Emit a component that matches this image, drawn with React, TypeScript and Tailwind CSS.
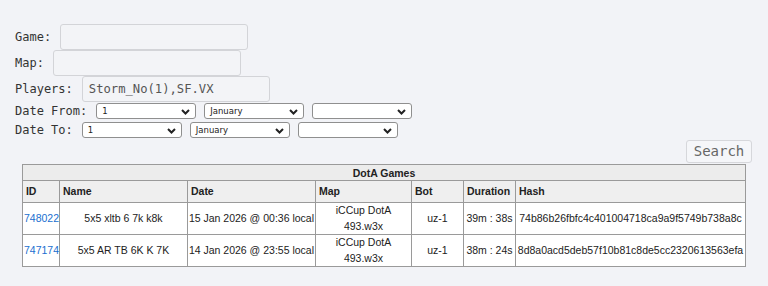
const games = [
  {
    id: "748022",
    name: "5x5 xltb 6 7k k8k",
    date: "15 Jan 2026 @ 00:36 local",
    bot: "uz-1",
    duration: "39m : 38s",
    hash: "74b86b26fbfc4c401004718ca9a9f5749b738a8c",
  },
  {
    id: "747174",
    name: "5x5 AR TB 6K K 7K",
    date: "14 Jan 2026 @ 23:55 local",
    bot: "uz-1",
    duration: "38m : 24s",
    hash: "8d8a0acd5deb57f10b81c8de5cc2320613563efa",
  },
];

const mono = "font-['DejaVu_Sans_Mono',monospace]";

function Chevron() {
  return (
    <svg
      className="pointer-events-none absolute right-[5px] top-[5px]"
      width="9"
      height="6"
      viewBox="0 0 9 6"
      fill="none"
    >
      <path d="M1 1l3.5 3.5L8 1" stroke="#222" strokeWidth="2" />
    </svg>
  );
}

function Select({ value }: { value: string }) {
  return (
    <div className="relative h-[16px] w-[100px] rounded-[3px] border border-[#8f8f8f] bg-white">
      <span className="block pl-[5px] font-['DejaVu_Sans',sans-serif] text-[8.5px] leading-[14px] text-[#222]">
        {value}
      </span>
      <Chevron />
    </div>
  );
}

function Field({ label, value }: { label: string; value?: string }) {
  return (
    <div className="flex h-[26px] items-center gap-[9px]">
      <span className={`${mono} text-[12px] text-[#333]`}>{label}</span>
      <div
        className={`${mono} flex h-[26px] w-[188px] items-center rounded-[3px] border border-[#d3d4d8] bg-[#f3f4f7] px-[6px] text-[12.2px] text-[#555]`}
      >
        {value}
      </div>
    </div>
  );
}

function DateRow({ label, className }: { label: string; className: string }) {
  return (
    <div className={`flex h-[16px] items-center gap-[8px] ${className}`}>
      <span className={`${mono} mr-px text-[12px] text-[#333]`}>{label}</span>
      <Select value="1" />
      <Select value="January" />
      <Select value="" />
    </div>
  );
}

export default function App() {
  return (
    <div className="h-[286px] w-[768px] overflow-hidden bg-[#f2f3f7]">
      <div className="flex flex-col pl-[15px] pr-[16px] pt-[24px]">
        <Field label="Game:" />
        <Field label="Map:" />
        <Field label="Players:" value="Storm_No(1),SF.VX" />
        <DateRow label="Date From:" className="mt-[1px]" />
        <DateRow label="Date To:" className="mt-[3px]" />
        <div className="mt-[2px] flex justify-end">
          <button
            className={`${mono} h-[23px] w-[66px] rounded-[3px] border border-[#d6d7db] bg-[#f5f6f9] text-[14px] text-[#666]`}
          >
            Search
          </button>
        </div>
      </div>
      <table className="mx-auto mt-[1px] w-[723px] table-fixed border-collapse font-['Liberation_Sans',Arial,sans-serif] text-[10.5px] text-[#222]">
        <colgroup>
          <col className="w-[37px]" />
          <col className="w-[128px]" />
          <col className="w-[128px]" />
          <col className="w-[96px]" />
          <col className="w-[52px]" />
          <col className="w-[52px]" />
          <col className="w-[230px]" />
        </colgroup>
        <thead>
          <tr className="h-[16px] bg-[#ececec]">
            <th colSpan={7} className="border border-[#9a9a9a] p-0 text-center font-bold leading-[14px]">
              DotA Games
            </th>
          </tr>
          <tr className="h-[22px] bg-[#efefef]">
            {["ID", "Name", "Date", "Map", "Bot", "Duration", "Hash"].map((h) => (
              <th key={h} className="border border-[#9a9a9a] px-[3px] text-left font-bold">
                {h}
              </th>
            ))}
          </tr>
        </thead>
        <tbody className="bg-white">
          {games.map((g) => (
            <tr key={g.id} className="h-[32px]">
              <td className="border border-[#9a9a9a] px-[1px] text-left">
                <a href="#" className="text-[#1a6fd0]">
                  {g.id}
                </a>
              </td>
              <td className="border border-[#9a9a9a] text-center">{g.name}</td>
              <td className="border border-[#9a9a9a] text-center">{g.date}</td>
              <td className="border border-[#9a9a9a] text-center leading-[15.5px]">
                iCCup DotA
                <br />
                493.w3x
              </td>
              <td className="border border-[#9a9a9a] text-center">{g.bot}</td>
              <td className="border border-[#9a9a9a] text-center">{g.duration}</td>
              <td className="border border-[#9a9a9a] text-center">{g.hash}</td>
            </tr>
          ))}
        </tbody>
      </table>
    </div>
  );
}
